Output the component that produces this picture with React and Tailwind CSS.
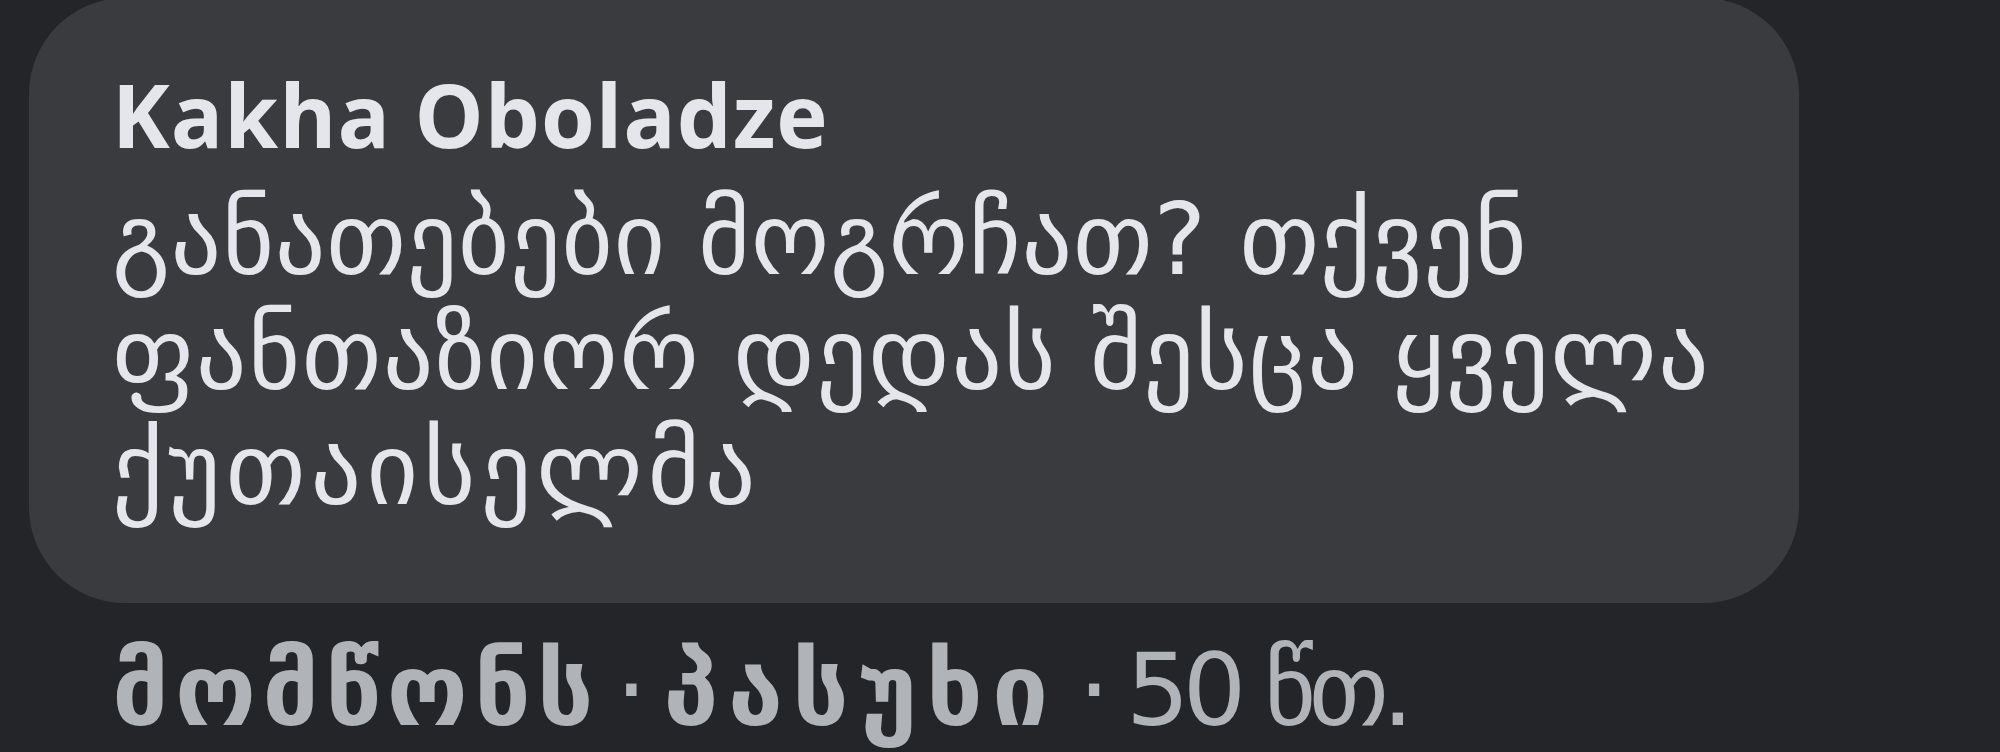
import React from "react";

const geo = { fontFamily: '"DejaVu Sans", "Noto Sans", sans-serif' };

const lines = [
  { text: "განათებები მოგრჩათ? თქვენ", cls: "tracking-[0.5px]" },
  { text: "ფანთაზიორ დედას შესცა ყველა", cls: "tracking-[1.3px]" },
  { text: "ქუთაისელმა", cls: "tracking-[5px]" },
];

export default function App() {
  return (
    <div className="w-[2000px] h-[752px] overflow-hidden bg-[#242528]">
      <div className="pl-[29px] -mt-[2px]">
        {/* comment bubble */}
        <div className="w-[1770px] h-[605px] rounded-[96px] bg-[#3a3b3e] pl-[83px] pt-[66px]">
          <div
            className="text-[#e4e6eb] text-[87px] font-bold leading-[100px] tracking-[1px]"
            style={{ fontFamily: '"Open Sans", "Liberation Sans", sans-serif' }}
          >
            Kakha Oboladze
          </div>
          <div className="mt-[18px] text-[#e4e6eb] text-[100px] leading-[115px]" style={geo}>
            {lines.map((l) => (
              <div key={l.text} className={l.cls}>
                {l.text}
              </div>
            ))}
          </div>
        </div>

        {/* actions */}
        <div className="pl-[83px] pt-[38px] text-[#b0b3b8] text-[100px] leading-[100px] flex items-baseline" style={geo}>
          <span className="font-bold tracking-[6px]">მომწონს</span>
          <span className="px-[16px]">·</span>
          <span className="font-bold tracking-[9px]">პასუხი</span>
          <span className="pl-[21px] pr-[16px]">·</span>
          <span className="tracking-[-7px]">50 წთ.</span>
        </div>
      </div>
    </div>
  );
}
